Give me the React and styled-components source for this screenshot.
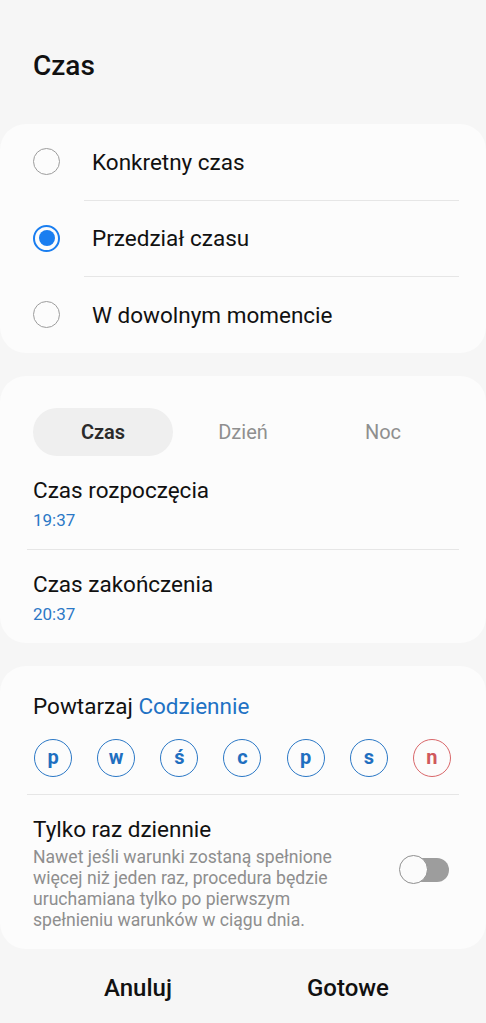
import React, { useState } from "react";
import styled, { createGlobalStyle } from "styled-components";

const GlobalStyle = createGlobalStyle`
  body {
    margin: 0;
    background: #f6f6f6;
    font-family: Roboto, "Noto Sans", "Liberation Sans", sans-serif;
    color: #111111;
  }
`;

const Page = styled.div`
  display: flex;
  flex-direction: column;
  min-height: 1023px;
`;

const Title = styled.h1`
  margin: 0;
  padding: 46px 33px 38px;
  font-size: 28px;
  line-height: 40px;
  font-weight: 500;
`;

const Card = styled.section`
  background: #fcfcfc;
  border-radius: 26px;
  margin-bottom: ${(p) => p.$gap ?? 23}px;
  padding: ${(p) => p.$pad || "0"};
`;

const Divider = styled.div`
  height: 1px;
  background: #e6e6e6;
  margin: 0 27px 0 ${(p) => p.$left ?? 27}px;
`;

const RadioRow = styled.label`
  display: flex;
  align-items: center;
  gap: 32px;
  height: 75.5px;
  padding: 0 33px;
  font-size: 22.5px;
  cursor: pointer;
`;

const RadioDot = styled.span`
  box-sizing: border-box;
  width: 27px;
  height: 27px;
  border-radius: 50%;
  border: ${(p) => (p.$on ? "2px solid #1a7ef0" : "1.5px solid #9c9c9c")};
  display: flex;
  align-items: center;
  justify-content: center;
  flex-shrink: 0;

  &::after {
    content: "";
    width: 16px;
    height: 16px;
    border-radius: 50%;
    background: ${(p) => (p.$on ? "#1a7ef0" : "transparent")};
  }
`;

const Tabs = styled.div`
  display: grid;
  grid-template-columns: repeat(3, 1fr);
  margin: 0 33px;
`;

const Tab = styled.button`
  height: 48px;
  border: none;
  border-radius: 24px;
  background: ${(p) => (p.$active ? "#efefef" : "transparent")};
  color: ${(p) => (p.$active ? "#2b2b2b" : "#8f8f8f")};
  font-family: inherit;
  font-size: 20px;
  font-weight: ${(p) => (p.$active ? 600 : 400)};
  cursor: pointer;
`;

const TimeRow = styled.div`
  padding: 20px 33px 19px;
`;

const RowTitle = styled.div`
  font-size: 22.5px;
  line-height: 28px;
`;

const TimeValue = styled.div`
  margin-top: 6px;
  font-size: 17px;
  line-height: 20px;
  color: #2b78c6;
`;

const Repeat = styled.div`
  padding: 0 33px;
  font-size: 22.5px;
  line-height: 28px;

  span {
    color: #1f72c4;
  }
`;

const Days = styled.div`
  display: flex;
  justify-content: space-between;
  padding: 19px 35px 17px 34px;
`;

const Day = styled.button`
  box-sizing: border-box;
  width: 38px;
  height: 38px;
  border-radius: 50%;
  border: 1.5px solid ${(p) => (p.$sunday ? "#d9676a" : "#2b78c6")};
  background: transparent;
  color: ${(p) => (p.$sunday ? "#d0595c" : "#1f6fc0")};
  font-family: inherit;
  font-size: 20px;
  font-weight: 700;
  line-height: 1;
  padding: 0 0 2px;
  cursor: pointer;
`;

const OnceRow = styled.div`
  display: flex;
  align-items: center;
  justify-content: space-between;
  padding: 20px 37px 18px 33px;
`;

const OnceText = styled.div`
  width: 318px;
`;

const Hint = styled.p`
  margin: 4px 0 0;
  font-size: 17.6px;
  line-height: 21px;
  color: #8e8e8e;
`;

const Switch = styled.button`
  position: relative;
  width: 50px;
  height: 29px;
  padding: 0;
  border: none;
  background: transparent;
  cursor: pointer;
  margin-top: -6px;

  &::before {
    content: "";
    position: absolute;
    left: 4px;
    right: 0;
    top: 2.5px;
    height: 24px;
    border-radius: 12px;
    background: ${(p) => (p.$on ? "#1a7ef0" : "#9d9d9d")};
  }

  &::after {
    content: "";
    position: absolute;
    top: 0;
    left: ${(p) => (p.$on ? "21px" : "0")};
    box-sizing: border-box;
    width: 29px;
    height: 29px;
    border-radius: 50%;
    background: #fbfbfb;
    border: 1.5px solid #8f8f8f;
  }
`;

const Footer = styled.div`
  display: grid;
  grid-template-columns: 1fr 1fr;
  padding: 0 33px;
`;

const FooterButton = styled.button`
  height: 78px;
  border: none;
  background: transparent;
  font-family: inherit;
  font-size: 24px;
  font-weight: 500;
  color: #111111;
  cursor: pointer;
`;

const options = ["Konkretny czas", "Przedział czasu", "W dowolnym momencie"];
const tabs = ["Czas", "Dzień", "Noc"];
const days = ["p", "w", "ś", "c", "p", "s", "n"];

export default function App() {
  const [choice, setChoice] = useState(1);
  const [tab, setTab] = useState(0);
  const [once, setOnce] = useState(false);

  return (
    <Page>
      <GlobalStyle />
      <Title>Czas</Title>

      <Card>
        {options.map((o, i) => (
          <React.Fragment key={o}>
            {i > 0 && <Divider $left={84} />}
            <RadioRow onClick={() => setChoice(i)}>
              <RadioDot $on={choice === i} />
              {o}
            </RadioRow>
          </React.Fragment>
        ))}
      </Card>

      <Card $pad="32px 0 0">
        <Tabs>
          {tabs.map((t, i) => (
            <Tab key={t} $active={tab === i} onClick={() => setTab(i)}>
              {t}
            </Tab>
          ))}
        </Tabs>
        <TimeRow>
          <RowTitle>Czas rozpoczęcia</RowTitle>
          <TimeValue>19:37</TimeValue>
        </TimeRow>
        <Divider />
        <TimeRow>
          <RowTitle>Czas zakończenia</RowTitle>
          <TimeValue>20:37</TimeValue>
        </TimeRow>
      </Card>

      <Card $pad="26px 0 0" $gap={0}>
        <Repeat>
          Powtarzaj <span>Codziennie</span>
        </Repeat>
        <Days>
          {days.map((d, i) => (
            <Day key={i} $sunday={i === 6}>
              {d}
            </Day>
          ))}
        </Days>
        <Divider />
        <OnceRow>
          <OnceText>
            <RowTitle>Tylko raz dziennie</RowTitle>
            <Hint>
              Nawet jeśli warunki zostaną spełnione więcej niż jeden raz,
              procedura będzie uruchamiana tylko po pierwszym spełnieniu
              warunków w ciągu dnia.
            </Hint>
          </OnceText>
          <Switch $on={once} onClick={() => setOnce(!once)} />
        </OnceRow>
      </Card>

      <Footer>
        <FooterButton>Anuluj</FooterButton>
        <FooterButton>Gotowe</FooterButton>
      </Footer>
    </Page>
  );
}
